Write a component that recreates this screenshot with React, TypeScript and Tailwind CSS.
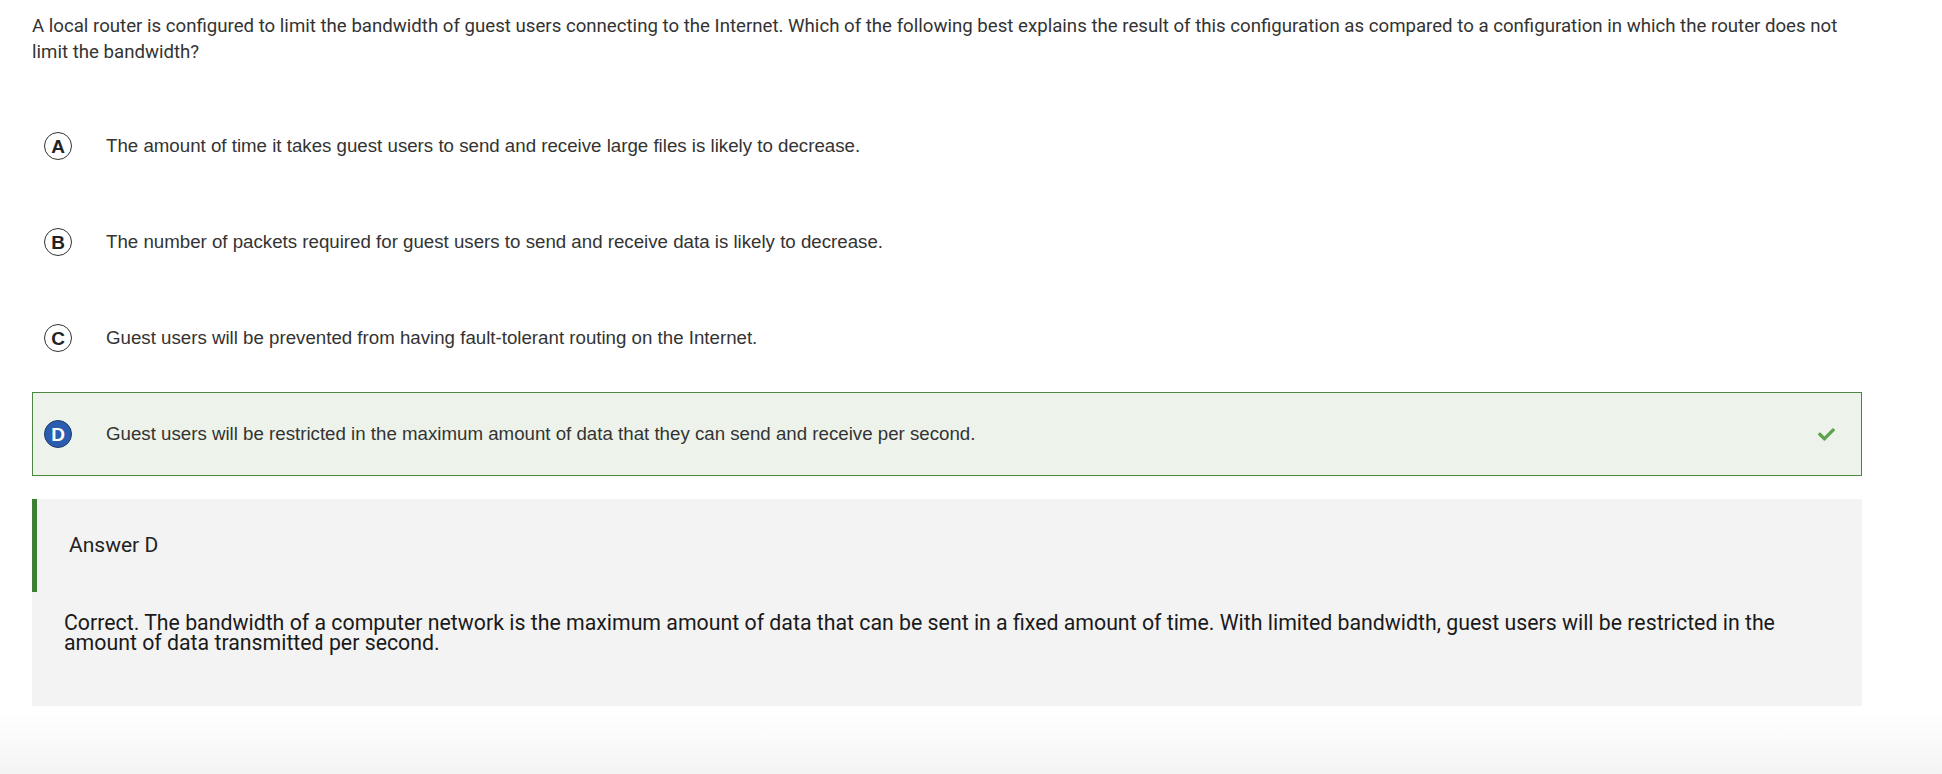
import { FaCheck } from 'react-icons/fa';

const OPTIONS = [
  { letter: 'A', text: 'The amount of time it takes guest users to send and receive large files is likely to decrease.' },
  { letter: 'B', text: 'The number of packets required for guest users to send and receive data is likely to decrease.' },
  { letter: 'C', text: 'Guest users will be prevented from having fault-tolerant routing on the Internet.' },
  { letter: 'D', text: 'Guest users will be restricted in the maximum amount of data that they can send and receive per second.', correct: true },
];

function OptionRow({ letter, text, correct }: { letter: string; text: string; correct?: boolean }) {
  return (
    <div
      className={`flex h-[84px] items-center border pl-[11px] pr-[26px] ${
        correct ? 'border-[#4c8740] bg-[#edf3eb]' : 'border-transparent'
      }`}
    >
      <span
        className={`flex h-[28px] w-[28px] shrink-0 items-center justify-center rounded-full border text-[19px] font-bold leading-none ${
          correct ? 'border-[#1e3a6e] bg-[#2a5db0] text-white' : 'border-[#333] bg-white text-[#222]'
        }`}
        style={{ fontFamily: '"Liberation Sans", Arial, sans-serif' }}
      >
        {letter}
      </span>
      <span className="ml-[34px] flex-1 text-[18.7px] text-[#333]" style={{ fontFamily: '"Liberation Sans", Arial, sans-serif' }}>
        {text}
      </span>
      {correct && <FaCheck className="text-[#5aa34a]" size={17} />}
    </div>
  );
}

export default function App() {
  return (
    <div className="min-h-[774px] bg-white" style={{ fontFamily: 'Roboto, "Liberation Sans", sans-serif' }}>
      <div className="pl-8 pr-[80px]">
        <p className="pt-[13px] text-[18.65px] leading-[26px] text-[#333]">
          A local router is configured to limit the bandwidth of guest users connecting to the Internet. Which of the following best explains the
          result of this configuration as compared to a configuration in which the router does not limit the bandwidth?
        </p>

        <div className="mt-[39px] flex flex-col gap-[12px]">
          {OPTIONS.map((o) => (
            <OptionRow key={o.letter} {...o} />
          ))}
        </div>

        <div className="mt-[23px] bg-[#f3f3f3]">
          <div className="flex h-[93px] items-center border-l-[5px] border-[#3d7f33] pl-8 text-[21px] text-[#222]">Answer D</div>
          <p className="pb-[53px] pl-8 pr-[60px] pt-[21px] text-[21.3px] leading-[20px] text-[#1a1a1a]">
            Correct. The bandwidth of a computer network is the maximum amount of data that can be sent in a fixed amount of time. With limited
            bandwidth, guest users will be restricted in the amount of data transmitted per second.
          </p>
        </div>
      </div>
      <div className="h-[68px] bg-linear-to-b from-white from-10% to-[#f4f4f4]" />
    </div>
  );
}
